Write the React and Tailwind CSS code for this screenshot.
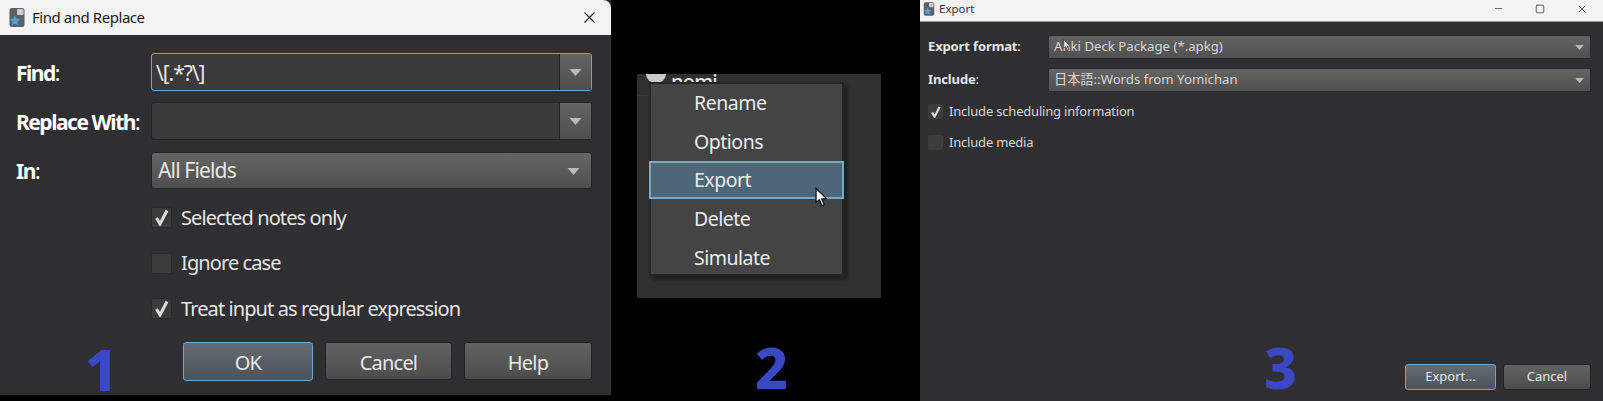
import React from 'react';
import { X, Minus, Square } from 'lucide-react';

const AnkiIcon = ({ className }) => (
  <svg viewBox="0 0 16 20" className={className}>
    <rect x="0.5" y="0.5" width="15" height="19" rx="2.5" fill="#5c6066" />
    <rect x="8" y="1.5" width="6.5" height="6" rx="1" fill="#c9ccd0" />
    <path d="M6 8 L7.6 11.2 L11.2 11.7 L8.6 14.2 L9.2 17.8 L6 16.1 L2.8 17.8 L3.4 14.2 L0.8 11.7 L4.4 11.2 Z" fill="#4da3e0" />
  </svg>
);

const Caret = ({ className }) => (
  <svg viewBox="0 0 12 7" className={className}>
    <path d="M0 0 H12 L6 7 Z" fill="#b9b9b9" />
  </svg>
);

const Check = ({ className }) => (
  <svg viewBox="0 0 14 16" className={className}>
    <path d="M1.5 8.5 L5 14.5 L12 1" fill="none" stroke="#dcdcdc" strokeWidth="3" />
  </svg>
);

function BigNumber({ children, className }) {
  return (
    <span className={`absolute font-['Noto_Sans',sans-serif] font-extrabold text-[57px] leading-[60px] text-[#3a48c6] ${className}`}>
      {children}
    </span>
  );
}

function EditCombo({ value, focused }) {
  return (
    <div className={`flex h-[38px] w-full rounded-[3px] border ${focused ? 'border-[#6fa6c6]' : 'border-[#242424]'} bg-[#3a3a3b]`}>
      <div className="flex-1 pl-[4px] pt-[1px] text-[21px] leading-[36px] tracking-[-0.05em] text-[#e8e8e8]">{value}</div>
      <div className="flex w-[32px] items-center justify-center border-l border-[#222] bg-gradient-to-b from-[#646464] to-[#4e4e4e]">
        <Caret className="w-[13px] h-[7px]" />
      </div>
    </div>
  );
}

function FormRow({ label, children }) {
  return (
    <div className="flex items-center h-[38px] mb-[11px]">
      <div className="w-[135px] shrink-0 pt-[3px] whitespace-nowrap text-[21px] text-white tracking-[-0.07em]">
        <span className="font-bold">{label}</span>:
      </div>
      <div className="flex-1">{children}</div>
    </div>
  );
}

function CheckRow({ label, checked }) {
  return (
    <div className="flex items-center h-[21px] mb-[24.5px] ml-[135px]">
      <div className="flex w-[21px] h-[21px] items-center justify-center rounded-[2px] border border-[#292929] bg-[#3b3b3c]">
        {checked && <Check className="w-[14px] h-[17px]" />}
      </div>
      <span className="ml-[9px] text-[20px] text-[#e6e6e6] tracking-[-0.045em]">{label}</span>
    </div>
  );
}

function DialogButton({ label, primary, className, small }) {
  return (
    <div className={`flex items-center justify-center rounded-[3px] border ${primary ? 'border-[#6fa6c6] from-[#646c72] to-[#4c5359]' : 'border-[#232323] from-[#626262] to-[#4c4c4c]'} bg-gradient-to-b ${small ? 'text-[13px]' : 'text-[20px] pt-[3px] tracking-[-0.04em]'} text-[#e8e8e8] ${className}`}>
      {label}
    </div>
  );
}

function FindReplace() {
  return (
    <div className="relative flex flex-col w-[611px] h-[395px] shrink-0 bg-[#2f2f31] font-['Noto_Sans',sans-serif]">
      <div className="flex items-center h-[35px] shrink-0 rounded-tr-lg bg-[#f3f3f3] pl-[9px] pr-[12px]">
        <AnkiIcon className="w-[16px] h-[21px]" />
        <span className="ml-[7px] pb-[1px] text-[15px] text-[#1a1a1a] tracking-[-0.03em]">Find and Replace</span>
        <X className="ml-auto w-[19px] h-[19px] text-[#222]" strokeWidth={1.4} />
      </div>
      <div className="flex flex-col pl-[16px] pr-[19px] pt-[18px]">
        <FormRow label="Find">
          <EditCombo value="\[.*?\]" focused />
        </FormRow>
        <FormRow label="Replace With">
          <EditCombo value="" />
        </FormRow>
        <FormRow label="In">
          <div className="flex items-center h-[37px] rounded-[3px] border border-[#242424] bg-gradient-to-b from-[#666666] to-[#4e4e4e] pl-[6px] pr-[11px] pt-[2px] text-[21px] text-[#e8e8e8] tracking-[-0.04em]">
            All Fields
            <Caret className="ml-auto w-[13px] h-[7px]" />
          </div>
        </FormRow>
        <div className="h-[7px]" />
        <CheckRow label="Selected notes only" checked />
        <CheckRow label="Ignore case" />
        <CheckRow label="Treat input as regular expression" checked />
        <div className="flex justify-end gap-[12px] -mt-[1.5px]">
          <DialogButton label="OK" primary className="w-[130px] h-[39px]" />
          <DialogButton label="Cancel" className="w-[127px] h-[38px]" />
          <DialogButton label="Help" className="w-[128px] h-[38px]" />
        </div>
      </div>
      <BigNumber className="left-[85px] top-[339px]">1</BigNumber>
    </div>
  );
}

const menuItems = ['Rename', 'Options', 'Export', 'Delete', 'Simulate'];

function DeckMenu() {
  return (
    <div className="relative w-[309px] h-[401px] shrink-0 pl-[26px] pt-[74px] font-['Noto_Sans',sans-serif]">
      <div className="relative w-[244px] h-[224px] overflow-hidden bg-[#303031]">
        <div className="flex items-start h-[21px] pl-[9px] text-[20px] leading-[16px] text-[#e8e8e8] tracking-[-0.04em]">
          <span className="w-[20px] h-[9px] rounded-b-full bg-[#c8c8c8]" />
          <span className="ml-[5px] font-medium">nomi</span>
        </div>
        <div className="w-[12px] h-px bg-[#3a3a3a]" />
        <div className="absolute left-[12px] top-[8px] w-[195px] h-[194px] border-2 border-[#262626] bg-[#444445] shadow-[4px_4px_3px_rgba(0,0,0,0.35)]">
          <div className="-mt-[1px]">
            {menuItems.map(item => (
              <div
                key={item}
                className={`flex items-center h-[38.8px] pl-[43px] text-[19.5px] text-[#ececec] tracking-[-0.025em] ${item === 'Export' ? '-mx-[2px] border-2 border-[#74a9c8] bg-[#4d6778]' : ''}`}
              >
                {item}
              </div>
            ))}
          </div>
        </div>
        <svg viewBox="0 0 12 18" className="absolute left-[178px] top-[113px] w-[13px] h-[20px]">
          <path d="M1 1 L1 14 L4 11.5 L6.5 17 L8.5 16 L6.2 10.8 L10.5 10.5 Z" fill="#fff" stroke="#000" strokeWidth="1" />
        </svg>
      </div>
      <BigNumber className="left-[144px] top-[337px]">2</BigNumber>
    </div>
  );
}

function ExportRow({ label, value }) {
  return (
    <div className="flex items-center h-[24px] mb-[9px]">
      <div className="w-[120px] shrink-0 text-[13px] text-[#e8e8e8] tracking-[-0.01em]">
        <span className="font-bold">{label}</span>:
      </div>
      <div className="flex flex-1 items-center h-[24px] rounded-[2px] border border-[#2a2a2a] bg-gradient-to-b from-[#646464] to-[#505050] pl-[5px] pr-[6px] text-[13.2px] text-[#d6d6d6]">
        {value}
        <Caret className="ml-auto w-[9px] h-[5px]" />
      </div>
    </div>
  );
}

function ExportCheck({ label, checked }) {
  return (
    <div className="flex items-center h-[15px] mb-[16px]">
      <div className="flex w-[15px] h-[15px] items-center justify-center rounded-[2px] bg-[#3c3c3d]">
        {checked && <Check className="w-[10px] h-[12px]" />}
      </div>
      <span className="ml-[6px] text-[13px] tracking-[-0.015em] text-[#d6d6d6]">{label}</span>
    </div>
  );
}

function ExportDialog() {
  return (
    <div className="relative flex flex-col w-[683px] h-[401px] shrink-0 bg-[#2f2f31] font-['Noto_Sans','Noto_Sans_CJK_JP',sans-serif]">
      <div className="flex items-center h-[22px] shrink-0 border-b border-[#9a9a9a] bg-[#f3f3f3] pl-[3px] pr-[15px] pb-[4px]">
        <AnkiIcon className="w-[12px] h-[14px]" />
        <span className="ml-[4px] text-[11.5px] text-[#333]">Export</span>
        <Minus className="ml-auto w-[11px] h-[11px] text-[#333]" strokeWidth={1.5} />
        <Square className="ml-[31px] w-[10px] h-[10px] text-[#333]" strokeWidth={1.8} />
        <X className="ml-[31px] w-[12px] h-[12px] text-[#333]" strokeWidth={1.5} />
      </div>
      <div className="flex flex-col flex-1 pl-[8px] pr-[12px] pt-[13px]">
        <ExportRow label="Export format" value="Anki Deck Package (*.apkg)" />
        <ExportRow label="Include" value="日本語::Words from Yomichan" />
        <div className="h-[3px]" />
        <ExportCheck label="Include scheduling information" checked />
        <ExportCheck label="Include media" />
        <div className="flex justify-end items-center gap-[7px] mt-auto mb-[11px]">
          <DialogButton label="Export..." primary small className="w-[91px] h-[26px]" />
          <DialogButton label="Cancel" small className="w-[88px] h-[26px]" />
        </div>
      </div>
      <BigNumber className="left-[344px] top-[337px]">3</BigNumber>
      <svg viewBox="0 0 12 18" className="absolute left-[143px] top-[39px] w-[8px] h-[12px]">
        <path d="M1 1 L1 14 L4 11.5 L6.5 17 L8.5 16 L6.2 10.8 L10.5 10.5 Z" fill="#ddd" stroke="#333" strokeWidth="1" />
      </svg>
    </div>
  );
}

export default function App() {
  return (
    <div className="flex w-[1603px] h-[401px] overflow-hidden bg-black">
      <FindReplace />
      <DeckMenu />
      <ExportDialog />
    </div>
  );
}
